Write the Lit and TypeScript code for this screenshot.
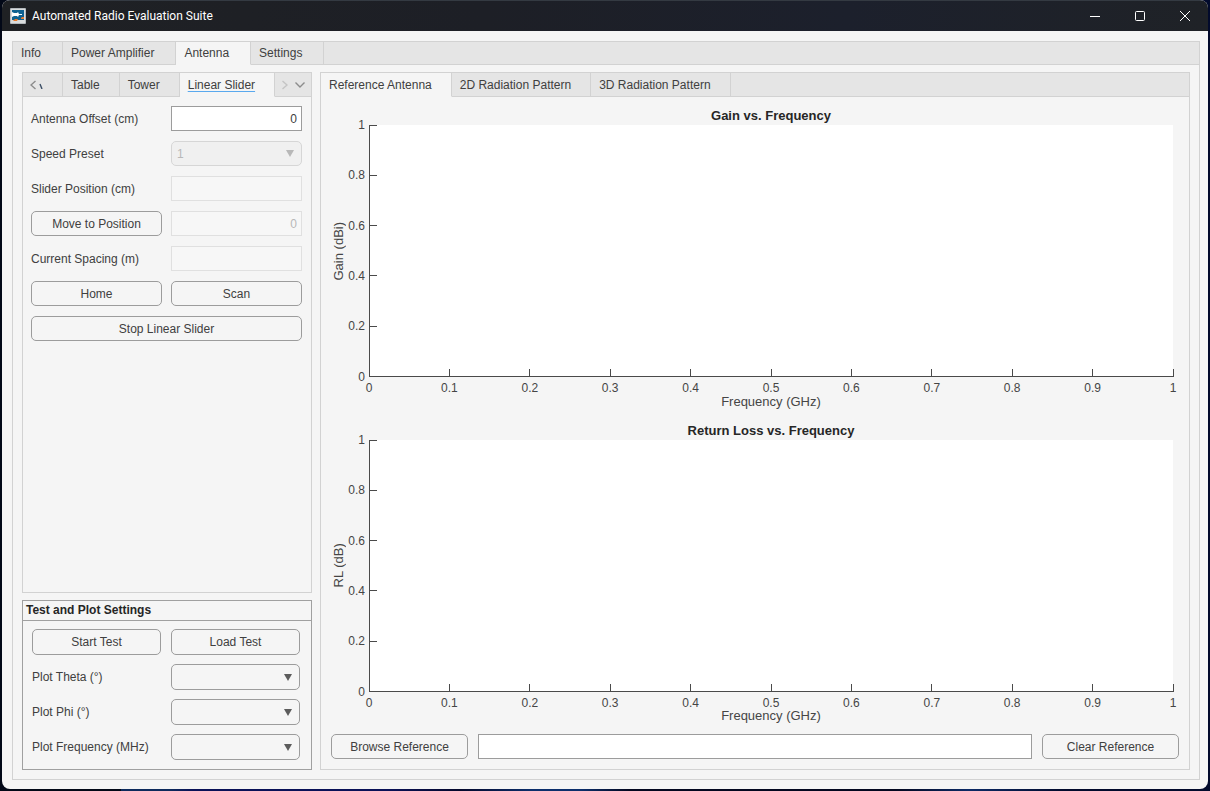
import { LitElement, html, svg, css } from "lit";
import { customElement, property } from "lit/decorators.js";

const shared = css`
  *, *::before, *::after { box-sizing: border-box; }
  button, input, select { font: inherit; color: inherit; margin: 0; }
  .btn {
    width: 100%;
    padding: 0 8px;
    border: 1px solid #9c9c9c;
    border-radius: 5px;
    background: #f5f5f5;
  }
  .field {
    width: 100%;
    min-width: 0;
    padding: 0 4px;
    border: 1px solid #9c9c9c;
    border-radius: 0;
    background: #fff;
  }
  .num { text-align: right; }
  .field:disabled { border-color: #e0e0e0; background: #f7f7f7; color: #b8b8b8; }
`;

@customElement("drop-down")
class DropDown extends LitElement {
  @property() label = "";
  @property() value = "";
  @property({ type: Boolean }) disabled = false;

  static styles = [shared, css`
    :host { display: grid; }
    .select, .arrow { grid-area: 1 / 1; }
    .select {
      appearance: none;
      width: 100%;
      height: 100%;
      padding: 0 24px 0 5px;
      border: 1px solid #9c9c9c;
      border-radius: 5px;
      background: #f5f5f5;
    }
    .select:disabled { border-color: #d6d6d6; background: #f0f0f0; color: #b8b8b8; opacity: 1; }
    .arrow { place-self: center end; margin-right: 8px; fill: #5c5c5c; pointer-events: none; }
    .select:disabled + .arrow { fill: #b8b8b8; }
  `];

  render() {
    return html`
      <select class="select" aria-label=${this.label} ?disabled=${this.disabled}>
        <option>${this.value}</option>
      </select>
      <svg class="arrow" width="8" height="7" aria-hidden="true"><path d="M0 0H8L4 7Z" /></svg>
    `;
  }
}

@customElement("axes-plot")
class AxesPlot extends LitElement {
  @property() heading = "";
  @property() ylabel = "";

  static styles = css`
    :host {
      display: grid;
      grid-template: 17px minmax(0, 1fr) 33px / 38px minmax(0, 1fr);
      padding: 0 6px 0 0;
      font-size: 13px;
      line-height: 16px;
      color: #454545;
    }
    .title { grid-area: 1 / 2; margin: 0; font-size: 13px; line-height: 16px; text-align: center; color: #262626; }
    .ylabel {
      grid-area: 2 / 1;
      writing-mode: vertical-rl;
      transform: rotate(180deg);
      text-align: center;
      justify-self: start;
    }
    .xlabel { grid-area: 3 / 2; align-self: end; text-align: center; }
    .axes { grid-area: 2 / 2; width: 100%; height: 100%; min-height: 0; overflow: visible; font-size: 12px; }
    .paper { fill: #fff; }
    .axis { stroke: #4a4a4a; stroke-width: 1; shape-rendering: crispEdges; }
    .tick { fill: #454545; }
    .x { text-anchor: middle; }
    .y { text-anchor: end; }
  `;

  render() {
    const xs = [0, 1, 2, 3, 4, 5, 6, 7, 8, 9, 10];
    const ys = [0, 2, 4, 6, 8, 10];
    return html`
      <h3 class="title">${this.heading}</h3>
      <div class="ylabel">${this.ylabel}</div>
      <svg class="axes" role="img" aria-label=${this.heading}>
        <rect class="paper" width="100%" height="100%" />
        <line class="axis" x1="0" y1="0" x2="0" y2="100%" />
        <line class="axis" x1="0" y1="100%" x2="100%" y2="100%" />
        ${xs.map((v) => svg`
          <svg x="${v * 10}%" y="100%" overflow="visible">
            <line class="axis" x1="0" y1="-8" x2="0" y2="0" />
            <text class="tick x" x="0" y="15">${v / 10}</text>
          </svg>`)}
        ${ys.map((v) => svg`
          <svg x="0" y="${100 - v * 10}%" overflow="visible">
            <line class="axis" x1="0" y1="0" x2="8" y2="0" />
            <text class="tick y" x="-4" y="4">${v / 10}</text>
          </svg>`)}
      </svg>
      <div class="xlabel">Frequency (GHz)</div>
    `;
  }
}

@customElement("app-root")
class AppRoot extends LitElement {
  static styles = [shared, css`
    :host {
      display: block;
      height: 100vh;
      font: 12px/16px "Liberation Sans", Arial, sans-serif;
      color: #404040;
    }
    .desktop {
      height: 100%;
      padding: 0 2px 2px;
      background: linear-gradient(90deg, #020817 0 10%, #0d2a5c 10% 14%, #0a1158 16% 32%, #04082c 38%, #0c2f6c 44% 48%, #03071f 52% 74%, #0c2a66 80%, #020a2c 88%);
    }
    .window {
      display: flex;
      flex-direction: column;
      height: 100%;
      border-radius: 8px;
      overflow: hidden;
      background: #f5f5f5;
    }
    .titlebar {
      display: flex;
      align-items: center;
      flex: none;
      height: 31px;
      padding: 0 1px 0 8px;
      border-top: 1px solid #343a42;
      background: linear-gradient(90deg, #1f2124, #1d1f26 40%, #1c202c 70%, #1f2227);
      color: #fff;
    }
    .caption { flex: 1; margin: 0 0 0 6px; font: 12px/16px "Segoe UI", Roboto, sans-serif; }
    .winbtn {
      display: grid;
      place-items: center;
      width: 45px;
      height: 30px;
      padding: 0;
      border: 0;
      background: none;
      color: #fff;
    }
    .winbtn svg { fill: none; stroke: currentColor; }
    .frame {
      flex: 1;
      min-height: 0;
      display: flex;
      flex-direction: column;
      margin: 10px 8px 9px 10px;
      border: 1px solid #d2d2d2;
    }
    .tabs { display: flex; flex: none; height: 23px; background: #e5e5e5; }
    .inner { height: 24px; }
    .tab {
      padding: 0 21px 0 8px;
      border: 0;
      border-right: 1px solid #d2d2d2;
      border-bottom: 1px solid #d2d2d2;
      background: none;
      white-space: nowrap;
    }
    .inner .tab { padding-right: 19px; }
    .tab.on { background: #f5f5f5; border-bottom-color: #f5f5f5; }
    .tab.link span { text-decoration: underline 1px #5aa9ee; text-decoration-skip-ink: none; text-underline-offset: 2px; }
    .scroll {
      display: flex;
      align-items: center;
      gap: 3px;
      padding: 0 0 0 7px;
      border: 0;
      border-bottom: 1px solid #d2d2d2;
      background: none;
    }
    .back { width: 40px; border-right: 1px solid #d2d2d2; }
    .scroll svg { fill: none; stroke: #8c8c8c; stroke-width: 1.4; }
    .scroll .faint { stroke: #c4c4c4; }
    .scroll .cut { stroke: #3d4f66; }
    .rest { flex: 1; border-bottom: 1px solid #d2d2d2; }
    .body { flex: 1; min-height: 0; display: flex; gap: 8px; padding: 7px 9px 9px; }
    .side { flex: none; width: 290px; display: flex; flex-direction: column; gap: 7px; }
    .card { display: flex; flex-direction: column; border: 1px solid #d2d2d2; }
    .grow { flex: 1; min-width: 0; min-height: 0; }
    .form {
      display: grid;
      grid-template-columns: 1fr 1fr;
      grid-auto-rows: 25px;
      gap: 10px 9px;
      padding: 9px 9px 9px 8px;
    }
    .form label { align-self: center; }
    .wide { grid-column: 1 / 3; }
    .settings { border-color: #a0a0a0; }
    .heading {
      margin: 0;
      padding: 1px 3px 2px;
      border-bottom: 1px solid #a0a0a0;
      font-size: 12px;
      color: #262626;
    }
    .settings .form { grid-auto-rows: 26px; gap: 9px 10px; padding: 8px 11px 9px 9px; }
    .content { flex: 1; min-height: 0; display: flex; flex-direction: column; gap: 10px; padding: 11px 10px 10px; }
    .charts { flex: 1; min-height: 0; display: flex; flex-direction: column; gap: 13px; }
    .chart { flex: 1; min-height: 0; }
    .files { display: grid; grid-template: 25px / 137px 1fr 137px; gap: 10px; }
  `];

  private outer = ["Info", "Power Amplifier", "Antenna", "Settings"];
  private plots = ["Reference Antenna", "2D Radiation Pattern", "3D Radiation Pattern"];

  private tab(name: string, on: boolean, link = false) {
    return html`<button class="tab ${on ? "on" : ""} ${link ? "link" : ""}" role="tab" aria-selected=${on}><span>${name}</span></button>`;
  }

  render() {
    return html`
      <div class="desktop"><div class="window">
        <header class="titlebar">
          <svg width="16" height="16" viewBox="0 0 16 16" aria-hidden="true">
            <rect width="16" height="16" rx="1" fill="#b4b9bd" />
            <rect x="1" y="1" width="14" height="14" fill="#d9dcdd" />
            <rect x="2" y="2" width="12" height="10" fill="#0d6190" />
            <path d="M2 4L4 5H7L8 4L9 6H12V7H9L8 9L7 8H4L2 9Z" fill="#fff" />
            <path d="M3 13L5 11H8L7 13ZM11 10L12 9H14V11H11Z" fill="#e8792a" />
          </svg>
          <h1 class="caption">Automated Radio Evaluation Suite</h1>
          <button class="winbtn" aria-label="Minimize"><svg width="10" height="10"><path d="M0 5.5H10" /></svg></button>
          <button class="winbtn" aria-label="Maximize"><svg width="10" height="10"><rect x=".5" y=".5" width="9" height="9" rx="1" /></svg></button>
          <button class="winbtn" aria-label="Close"><svg width="10" height="10"><path d="M0 0L10 10M10 0L0 10" /></svg></button>
        </header>
        <main class="frame">
          <nav class="tabs" role="tablist">
            ${this.outer.map((t) => this.tab(t, t === "Antenna"))}
            <div class="rest"></div>
          </nav>
          <div class="body">
            <div class="side">
              <section class="card grow">
                <nav class="tabs inner" role="tablist">
                  <button class="scroll back" aria-label="Previous tabs">
                    <svg width="6" height="10"><path d="M5.5 1L1 5L5.5 9" /></svg>
                    <svg width="4" height="8"><path class="cut" d="M1 3L3 8" /></svg>
                  </button>
                  ${this.tab("Table", false)}${this.tab("Tower", false)}${this.tab("Linear Slider", true, true)}
                  <button class="scroll" aria-label="Next tabs">
                    <svg width="6" height="10"><path class="faint" d="M.5 1L5 5L.5 9" /></svg>
                  </button>
                  <button class="scroll" aria-label="All tabs">
                    <svg width="10" height="6"><path d="M.5 .5L5 5L9.5 .5" /></svg>
                  </button>
                  <div class="rest"></div>
                </nav>
                <div class="form">
                  <label for="offset">Antenna Offset (cm)</label>
                  <input class="field num" id="offset" value="0" />
                  <label for="speed">Speed Preset</label>
                  <drop-down id="speed" label="Speed Preset" value="1" disabled></drop-down>
                  <label for="position">Slider Position (cm)</label>
                  <input class="field num" id="position" disabled />
                  <button class="btn">Move to Position</button>
                  <input class="field num" aria-label="Target position" value="0" disabled />
                  <label for="spacing">Current Spacing (m)</label>
                  <input class="field num" id="spacing" disabled />
                  <button class="btn">Home</button>
                  <button class="btn">Scan</button>
                  <button class="btn wide">Stop Linear Slider</button>
                </div>
              </section>
              <section class="card settings">
                <h2 class="heading">Test and Plot Settings</h2>
                <div class="form">
                  <button class="btn">Start Test</button>
                  <button class="btn">Load Test</button>
                  ${["Plot Theta (°)", "Plot Phi (°)", "Plot Frequency (MHz)"].map((l, i) => html`
                    <label for="plot${i}">${l}</label>
                    <drop-down id="plot${i}" label=${l}></drop-down>`)}
                </div>
              </section>
            </div>
            <section class="card grow">
              <nav class="tabs inner" role="tablist">
                ${this.plots.map((t, i) => this.tab(t, i === 0))}
                <div class="rest"></div>
              </nav>
              <div class="content">
                <div class="charts">
                  <axes-plot class="chart" heading="Gain vs. Frequency" ylabel="Gain (dBi)"></axes-plot>
                  <axes-plot class="chart" heading="Return Loss vs. Frequency" ylabel="RL (dB)"></axes-plot>
                </div>
                <div class="files">
                  <button class="btn">Browse Reference</button>
                  <input class="field" aria-label="Reference file" />
                  <button class="btn">Clear Reference</button>
                </div>
              </div>
            </section>
          </div>
        </main>
      </div></div>
    `;
  }
}
